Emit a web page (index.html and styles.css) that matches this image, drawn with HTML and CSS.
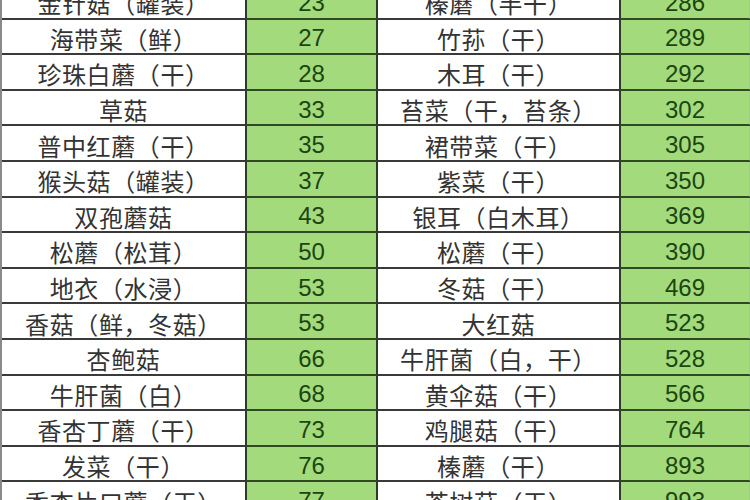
FILE: index.html
```html
<!DOCTYPE html>
<html lang="zh">
<head>
<meta charset="utf-8">
<link rel="stylesheet" href="styles.css">
</head>
<body>
<div class="sheet">
  <div class="table">
    <div class="name">金针菇（罐装）</div><div class="num">23</div><div class="name">榛蘑（半干）</div><div class="num last">286</div>
    <div class="name">海带菜（鲜）</div><div class="num">27</div><div class="name">竹荪（干）</div><div class="num last">289</div>
    <div class="name">珍珠白蘑（干）</div><div class="num">28</div><div class="name">木耳（干）</div><div class="num last">292</div>
    <div class="name">草菇</div><div class="num">33</div><div class="name">苔菜（干，苔条）</div><div class="num last">302</div>
    <div class="name">普中红蘑（干）</div><div class="num">35</div><div class="name">裙带菜（干）</div><div class="num last">305</div>
    <div class="name">猴头菇（罐装）</div><div class="num">37</div><div class="name">紫菜（干）</div><div class="num last">350</div>
    <div class="name">双孢蘑菇</div><div class="num">43</div><div class="name">银耳（白木耳）</div><div class="num last">369</div>
    <div class="name">松蘑（松茸）</div><div class="num">50</div><div class="name">松蘑（干）</div><div class="num last">390</div>
    <div class="name">地衣（水浸）</div><div class="num">53</div><div class="name">冬菇（干）</div><div class="num last">469</div>
    <div class="name">香菇（鲜，冬菇）</div><div class="num">53</div><div class="name">大红菇</div><div class="num last">523</div>
    <div class="name">杏鲍菇</div><div class="num">66</div><div class="name">牛肝菌（白，干）</div><div class="num last">528</div>
    <div class="name">牛肝菌（白）</div><div class="num">68</div><div class="name">黄伞菇（干）</div><div class="num last">566</div>
    <div class="name">香杏丁蘑（干）</div><div class="num">73</div><div class="name">鸡腿菇（干）</div><div class="num last">764</div>
    <div class="name">发菜（干）</div><div class="num">76</div><div class="name">榛蘑（干）</div><div class="num last">893</div>
    <div class="name">香杏片口蘑（干）</div><div class="num">77</div><div class="name">茶树菇（干）</div><div class="num last">993</div>
  </div>
</div>
</body>
</html>
```

FILE: styles.css
```css
html, body {
  margin: 0;
  padding: 0;
  background: #ffffff;
  overflow: hidden;
}
.sheet {
  width: 750px;
  height: 500px;
  overflow: hidden;
}
.table {
  margin-top: -16px;
  display: grid;
  grid-template-columns: 245px 131px 243px 131px;
  grid-auto-rows: 35.6px;
  border-left: 2px solid #8a8a8a;
  box-sizing: border-box;
  width: 750px;
}
.name, .num {
  display: flex;
  align-items: center;
  justify-content: center;
  border-bottom: 2px solid #3a3a3a;
  border-right: 2px solid #2e3a2a;
  box-sizing: border-box;
  white-space: nowrap;
}
.name {
  font-family: "Noto Sans CJK SC", "Noto Sans", sans-serif;
  font-weight: 400;
  font-size: 24px;
  color: #333333;
  padding-top: 4px;
  letter-spacing: 0.6px;
}
.num {
  background: #a2da7c;
  font-family: "Liberation Sans", Arial, sans-serif;
  font-size: 24px;
  color: #1c4510;
  padding-top: 4px;
  border-bottom-color: #2f4a22;
}
.num.last {
  border-right: 3px solid #9fcf80;
}
```
